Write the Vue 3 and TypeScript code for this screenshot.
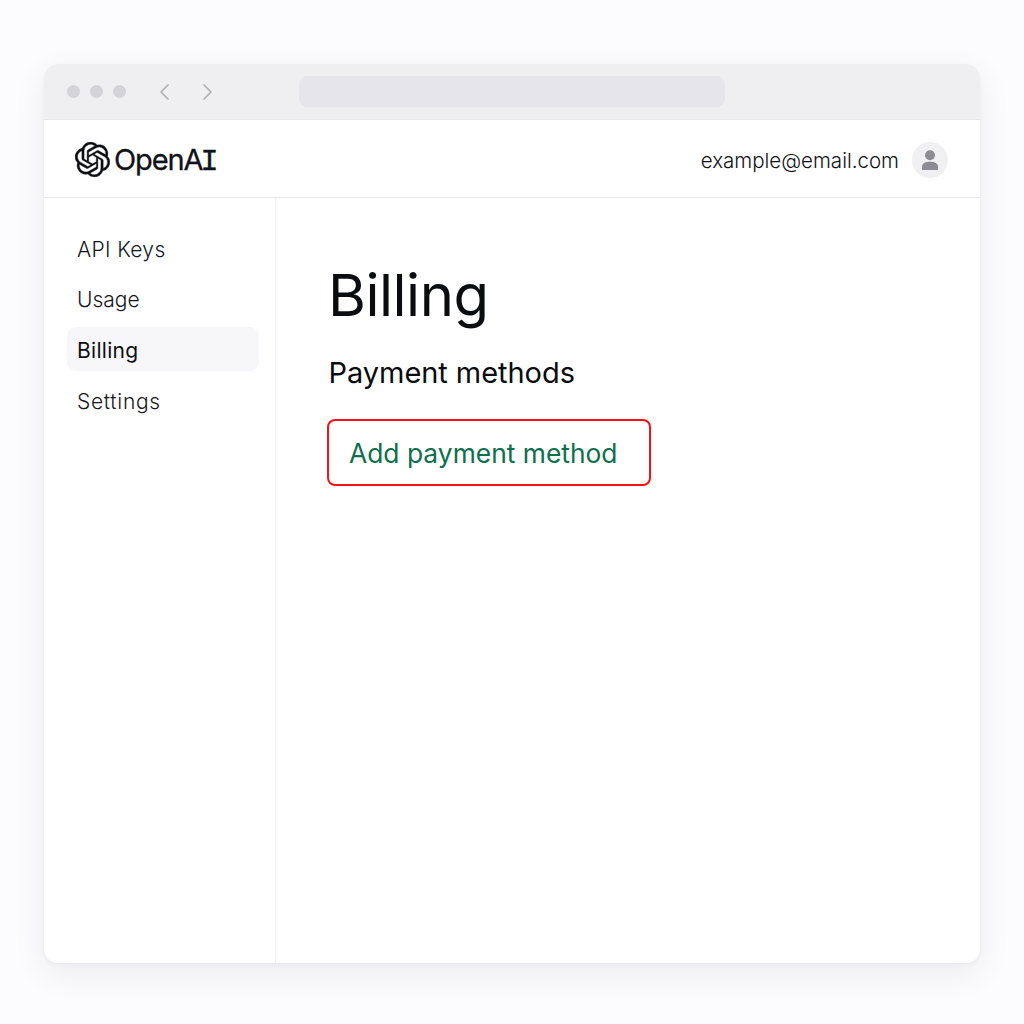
<script setup lang="ts">
const navItems: { label: string; active?: boolean; tracking?: string }[] = [
  { label: 'API Keys', tracking: '0.35px' },
  { label: 'Usage' },
  { label: 'Billing', active: true, tracking: '0.3px' },
  { label: 'Settings', tracking: '0.7px' },
]
</script>

<template>
  <div class="page">
    <div class="window">
      <div class="titlebar">
        <div class="dots"><span></span><span></span><span></span></div>
        <div class="arrows">
          <svg width="12" height="18" viewBox="0 0 12 18"><path d="M10 2 L3 9 L10 16" /></svg>
          <svg width="12" height="18" viewBox="0 0 12 18"><path d="M2 2 L9 9 L2 16" /></svg>
        </div>
        <div class="urlbar"></div>
      </div>
      <header class="topbar">
        <div class="brand">
          <svg class="logo" viewBox="0 0 24 24" width="35" height="35">
            <path d="M22.2819 9.8211a5.9847 5.9847 0 0 0-.5157-4.9108 6.0462 6.0462 0 0 0-6.5098-2.9A6.0651 6.0651 0 0 0 4.9807 4.1818a5.9847 5.9847 0 0 0-3.9977 2.9 6.0462 6.0462 0 0 0 .7427 7.0966 5.98 5.98 0 0 0 .511 4.9107 6.051 6.051 0 0 0 6.5146 2.9001A5.9847 5.9847 0 0 0 13.2599 24a6.0557 6.0557 0 0 0 5.7718-4.2058 5.9894 5.9894 0 0 0 3.9977-2.9001 6.0557 6.0557 0 0 0-.7475-7.0729zm-9.022 12.6081a4.4755 4.4755 0 0 1-2.8764-1.0408l.1419-.0804 4.7783-2.7582a.7948.7948 0 0 0 .3927-.6813v-6.7369l2.02 1.1686a.071.071 0 0 1 .038.052v5.5826a4.504 4.504 0 0 1-4.4945 4.4944zm-9.6607-4.1254a4.4708 4.4708 0 0 1-.5346-3.0137l.142.0852 4.783 2.7582a.7712.7712 0 0 0 .7806 0l5.8428-3.3685v2.3324a.0804.0804 0 0 1-.0332.0615L9.74 19.9502a4.4992 4.4992 0 0 1-6.1408-1.6464zM2.3408 7.8956a4.485 4.485 0 0 1 2.3655-1.9728V11.6a.7664.7664 0 0 0 .3879.6765l5.8144 3.3543-2.0201 1.1685a.0757.0757 0 0 1-.071 0l-4.8303-2.7865A4.504 4.504 0 0 1 2.3408 7.872zm16.5963 3.8558L13.1038 8.364 15.1192 7.2a.0757.0757 0 0 1 .071 0l4.8303 2.7913a4.4944 4.4944 0 0 1-.6765 8.1042v-5.6772a.79.79 0 0 0-.407-.667zm2.0107-3.0231l-.142-.0852-4.7735-2.7818a.7759.7759 0 0 0-.7854 0L9.409 9.2297V6.8974a.0662.0662 0 0 1 .0284-.0615l4.8303-2.7866a4.4992 4.4992 0 0 1 6.6802 4.66zM8.3065 12.863l-2.02-1.1638a.0804.0804 0 0 1-.038-.0567V6.0742a4.4992 4.4992 0 0 1 7.3757-3.4537l-.142.0805L8.704 5.459a.7948.7948 0 0 0-.3927.6813zm1.0976-2.3654l2.602-1.4998 2.6069 1.4998v2.9994l-2.5974 1.4997-2.6067-1.4997Z" />
          </svg>
          <span class="wordmark">OpenA<span class="serif-i">I</span></span>
        </div>
        <div class="account">
          <span class="email">example@email.com</span>
          <div class="avatar">
            <svg width="16" height="20" viewBox="0 0 16 20">
              <circle cx="8" cy="5.2" r="5" />
              <path d="M0 20 V16.5 C0 13.5 3 11.8 8 11.8 C13 11.8 16 13.5 16 16.5 V20 Z" />
            </svg>
          </div>
        </div>
      </header>
      <div class="body">
        <nav class="sidebar">
          <div
            v-for="item in navItems"
            :key="item.label"
            class="nav-item"
            :class="{ active: item.active }"
            :style="item.tracking ? { letterSpacing: item.tracking } : undefined"
          >{{ item.label }}</div>
        </nav>
        <main class="content">
          <h1>Billing</h1>
          <h2>Payment methods</h2>
          <button class="add">Add payment method</button>
        </main>
      </div>
    </div>
  </div>
</template>

<style>
html, body { margin: 0; background: #fcfcfe; }
</style>

<style scoped>
.page {
  width: 1024px;
  height: 1024px;
  box-sizing: border-box;
  padding: 64px 44px 61px;
  background: #fcfcfe;
  font-family: Inter, "Liberation Sans", sans-serif;
  overflow: hidden;
}
.window {
  height: 899px;
  background: #fff;
  border-radius: 14px;
  overflow: hidden;
  box-shadow: 0 2px 4px rgba(30, 30, 50, 0.04), 0 10px 34px rgba(30, 30, 50, 0.07);
  display: flex;
  flex-direction: column;
}
.titlebar {
  height: 56px;
  flex: none;
  box-sizing: border-box;
  background: #efeff2;
  border-bottom: 1px solid #e6e6ea;
  display: flex;
  align-items: center;
  padding: 0 0 0 23px;
}
.dots { display: flex; gap: 10px; }
.dots span { width: 13px; height: 13px; border-radius: 50%; background: #d3d3d8; }
.arrows { display: flex; gap: 32px; margin-left: 32px; }
.arrows svg { display: block; }
.arrows path { fill: none; stroke: #b0b0b5; stroke-width: 1.7; stroke-linecap: round; stroke-linejoin: round; }
.urlbar { width: 426px; height: 31px; margin-left: 85px; border-radius: 8px; background: #e6e6ea; }
.topbar {
  height: 78px;
  flex: none;
  box-sizing: border-box;
  border-bottom: 1px solid #e7e7ea;
  display: flex;
  align-items: center;
  justify-content: space-between;
  padding: 2px 32px 0 31px;
}
.brand { display: flex; align-items: center; gap: 4px; }
.logo { display: block; fill: #0d0f14; stroke: #0d0f14; stroke-width: 0.25; }
.wordmark { font-size: 29px; font-weight: 400; color: #10131a; letter-spacing: -1.1px; display: flex; align-items: baseline; padding-top: 1px; -webkit-text-stroke: 0.3px #10131a; }
.serif-i { font-family: "Liberation Mono", monospace; font-weight: 400; font-size: 30px; margin-left: -2px; -webkit-text-stroke: 0.4px #10131a; }
.account { display: flex; align-items: center; gap: 13px; }
.email { font-size: 20.5px; font-weight: 300; color: #0f1115; padding-top: 2px; }
.avatar {
  width: 36px;
  height: 36px;
  border-radius: 50%;
  background: #f0f0f2;
  display: flex;
  align-items: center;
  justify-content: center;
}
.avatar svg { display: block; fill: #8c8c92; }
.body { flex: 1; display: flex; min-height: 0; }
.sidebar {
  width: 232px;
  flex: none;
  box-sizing: border-box;
  border-right: 1px solid #f1f1f3;
  padding: 29px 16px 0 23px;
  display: flex;
  flex-direction: column;
  gap: 6px;
}
.nav-item {
  height: 44px;
  box-sizing: border-box;
  padding-left: 10px;
  display: flex;
  align-items: center;
  border-radius: 9px;
  font-size: 21px;
  font-weight: 300;
  color: #15171c;
}
.nav-item.active { background: #f7f7f9; font-weight: 400; color: #0d0f14; padding-top: 2px; margin-bottom: 2px; }
.content { flex: 1; padding: 59px 0 0 52px; }
h1 { margin: 0; font-size: 58px; line-height: 76px; font-weight: 400; color: #0a0c10; letter-spacing: -0.5px; }
h2 { margin: 21px 0 0 0.5px; font-size: 29px; line-height: 38px; font-weight: 400; color: #0a0c10; letter-spacing: -0.05px; }
.add {
  display: block;
  margin: 27px 0 0 -1px;
  width: 324px;
  height: 67px;
  box-sizing: border-box;
  padding: 1px 0 0 20px;
  text-align: left;
  background: #fff;
  border: 2px solid #f81218;
  border-radius: 8px;
  font-family: inherit;
  font-size: 26.4px;
  font-weight: 400;
  color: #0e6f4e;
}
</style>
